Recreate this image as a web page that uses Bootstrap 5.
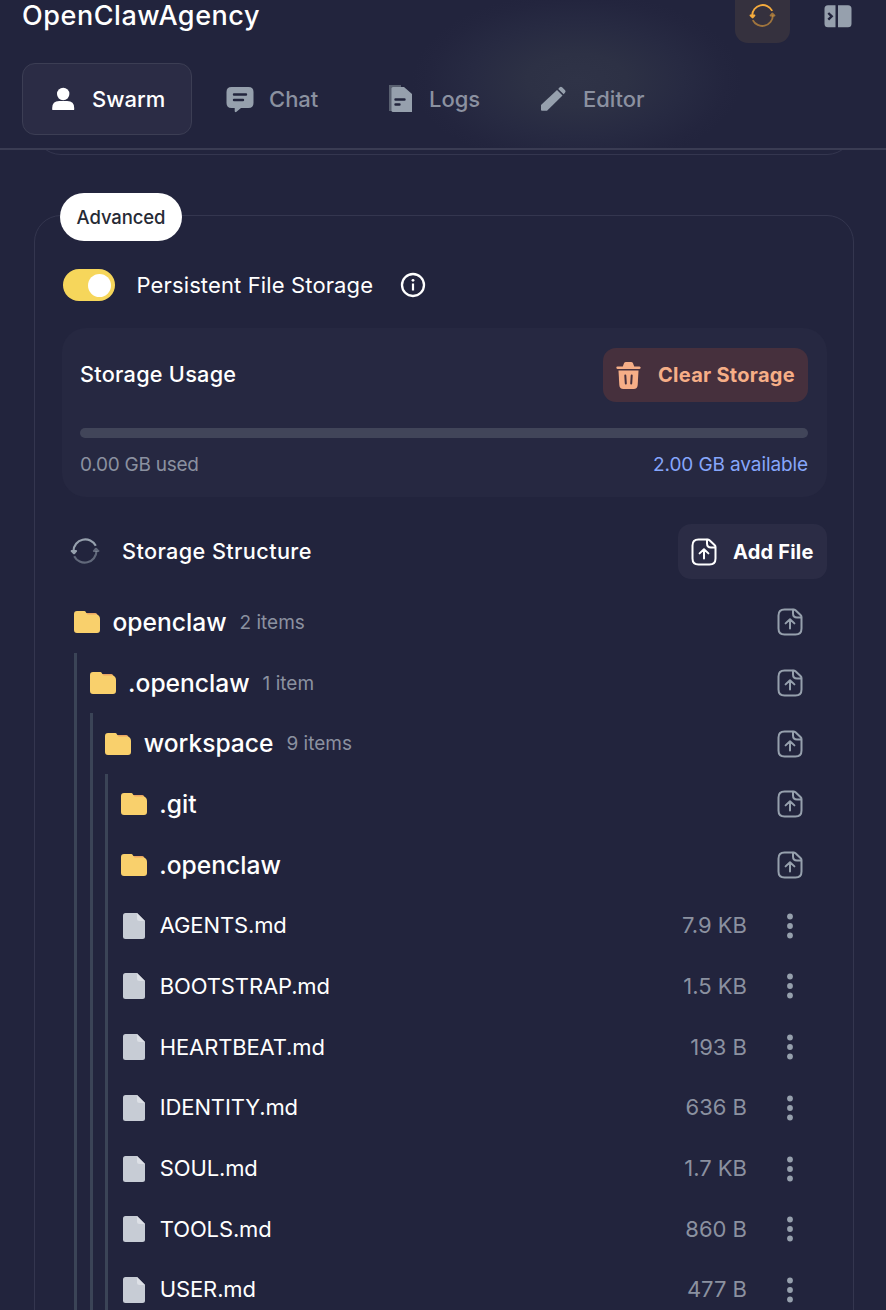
<!DOCTYPE html>
<html lang="en">
<head>
<meta charset="utf-8">
<meta name="viewport" content="width=device-width, initial-scale=1">
<title>OpenClawAgency</title>
<link href="https://cdn.jsdelivr.net/npm/bootstrap@5.3.0/dist/css/bootstrap.min.css" rel="stylesheet">
<style>
body{background:#22243d;color:#fff;font-family:Inter,"Liberation Sans",sans-serif;height:1310px;overflow:hidden}
svg{display:block;flex:none}
.lh0{line-height:1;white-space:nowrap}
.topbar{display:flow-root;height:150px;border-bottom:2px solid #3a3c53;padding:0 22px;background:radial-gradient(ellipse 165px 88px at 577px 80px,#2f3347 0,#2d3145 30%,#272a42 65%,#23253e 90%,#22243d 100%) #22243d;position:relative;z-index:2}
.brandrow{height:55px;margin-top:-12px;margin-bottom:20px}
.title{font-size:27px;font-weight:550;letter-spacing:.55px;position:relative;top:-.5px}
.sync{width:55px;height:55px;border-radius:13px;background:#35313e;color:#f5ab3d;margin-right:34px}
.panelicon{margin-right:11px}
.tab{height:72px;padding-left:26px;gap:14px;font-size:22px;font-weight:500;color:#8b91a0;border:0 solid #3c3e54;border-radius:13px}
.tab.on{width:170px;color:#fff;background:#2b2c45;border-width:1px;padding-left:25px;font-weight:550}
.t2{width:153px;margin-left:7px}.t3{width:147px;margin-left:7px}.t4{margin-left:7px}
.prev{height:60px;margin:-55px 32px 0 34px;border:1px solid #34364f;border-radius:27px}
.panel{margin:60px 32px 0 34px;height:1150px;border:1px solid #34364f;border-radius:27px;padding:53px 26px 0 27px}
.pill{left:25px;top:-23px;width:122px;height:48px;border-radius:24px;background:#fff;color:#262a35;font-size:18.5px;font-weight:500;letter-spacing:-.1px}
.switch{width:52px;height:32px;border-radius:16px;background:#f6d65b;padding:0 4.5px;margin-left:1px}
.knob{width:23px;height:23px;border-radius:50%;background:#fff}
.label{font-size:22px;margin-left:21.5px;letter-spacing:.13px}
.info{margin-left:27px}
.usage{margin-top:27px;height:169px;border-radius:24px;background:#262841;padding:20px 19px 0 18px}
.head{font-size:21.7px;font-weight:550;letter-spacing:.25px}
.clear{width:205px;height:54px;border-radius:13px;background:#46303d;color:#f6ae87;font-size:20px;font-weight:700;letter-spacing:.28px;padding-left:11px;gap:15px}
.track{height:10px;border-radius:5px;background:#414559;margin-top:26px}
.meta{font-size:19px;color:#8b91a0}
.caps{margin-top:17px;letter-spacing:-.25px}
.avail{color:#86a6fb;letter-spacing:-.1px}
.struct{margin:27px 0 13px}
.refresh{margin:0 22px 0 8px;position:relative;top:-1px}
.struct .head{letter-spacing:.38px}
.addf{width:149px;height:55px;border-radius:13px;background:#2b2c45;font-size:20px;font-weight:700;letter-spacing:.2px;padding-left:12px;gap:15px}
.row1{height:60.7px;padding-right:23px}
.dir{font-size:24.6px;font-weight:550;letter-spacing:0;margin:0 13px 0 12.5px}
.folder{margin-left:12px}
.doc{margin:0 15px 0 14px}
.dots{margin-right:11px}
.kids{margin-left:12px;border-left:3px solid #3b4457;padding-left:.6px}
.file{font-size:22px;letter-spacing:-.13px;position:relative;top:-.5px}
.size{font-size:22px;color:#8b91a0;margin-right:40px;position:relative;top:-.5px}
.gray{color:#96a0ad}
</style>
</head>
<body>
<svg width="0" height="0" class="position-absolute">
<symbol id="sync" viewBox="0 0 30 30"><g fill="none" stroke="currentColor" stroke-width="2.100"><path d="M3.500 15A11.800 11.800 0 0 1 25.800 9.800"/><path opacity=".55" d="M26.500 15A11.800 11.800 0 0 1 4.200 20.200"/></g><path fill="currentColor" d="M1.300 14h5.100q1.200.5.500 1.600L4.900 17.900q-.9.700-1.700 0L.8 15.600q-.6-1.100.5-1.600z"/><path opacity=".55" fill="currentColor" d="M28.700 16h-5.100q-1.200-.5-.5-1.600l2-2.300q.9-.7 1.700 0l2.400 2.300q.6 1.100-.5 1.600z"/></symbol>
<symbol id="up" viewBox="0 0 28 28"><g fill="none" stroke="currentColor" stroke-width="2" stroke-linecap="round" stroke-linejoin="round"><path d="M17.500 1.500H8.500Q2.500 1.500 2.500 7.500v13q0 6 6 6h11q6 0 6-6V9q0-1-1-2L19.500 2.200q-.8-.7-2-.7z"/><path d="M17 1.800v3.700q0 4 4 4h4"/><path d="M14 20.500v-9M9.600 15.400L14 11.200l4.400 4.200"/></g></symbol>
<symbol id="folder" viewBox="0 0 26 22"><path fill="#eaa663" d="M11 2h10.500q1.800 0 2 2.500l-1 2H9z"/><path fill="#f9d06c" d="M3 0h7.500q1.200 0 1.500 1.500L13.500 3.500H23q3 1 3 4.500V19q0 3-3 3H3q-3 0-3-3V3Q0 0 3 0z"/></symbol>
<symbol id="doc" viewBox="0 0 22 26"><path fill="#c7ccd5" d="M2.500 0H14l8 8v15.500Q22 26 19.500 26h-17Q0 26 0 23.500v-21Q0 0 2.500 0z"/><path fill="#dde0e6" d="M14 0l8 8h-5.500Q14 8 14 5.500z"/></symbol>
<symbol id="dots" viewBox="0 0 6 26"><g fill="currentColor"><circle cx="3" cy="3.500" r="2.900"/><circle cx="3" cy="13" r="2.900"/><circle cx="3" cy="22.500" r="2.900"/></g></symbol>
</svg>

<header class="topbar">
  <div class="brandrow d-flex align-items-center">
    <div class="title lh0 me-auto">OpenClawAgency</div>
    <div class="sync d-flex align-items-center justify-content-center"><svg width="27" height="27"><use href="#sync"/></svg></div>
    <svg class="gray panelicon" width="29" height="24" viewBox="0.500 0 29 24"><path fill="currentColor" d="M4.500 1.200H12v22H4.500q-3.500 0-3.500-3.500v-15q0-3.500 3.500-3.500zM14.500 1.200h10q3.500 0 3.500 3.500v15q0 3.500-3.500 3.500h-10z"/><path d="M4.800 9l3.400 3.300-3.400 3.300" fill="none" stroke="#22243d" stroke-width="2.400"/></svg>
  </div>
  <nav class="d-flex">
    <div class="tab on lh0 d-flex align-items-center"><svg width="30" height="30" viewBox="0 0 30 30" fill="#fff"><circle cx="15.200" cy="10" r="6.200"/><path d="M4.200 25.500v-1.500Q4.200 17 11.200 17h8q7 0 7 7v1.500q0 .5-1 .5h-20q-1 0-1-.5z"/></svg><span>Swarm</span></div>
    <div class="tab t2 lh0 d-flex align-items-center"><svg class="gray" width="30" height="30" viewBox="0 0 30 30"><path fill="currentColor" d="M6.500 3h17q5 0 5 5v11q0 5-5 5H16l-4.500 3.800q-1.800 1-1.800-.8v-3H6.500q-5 0-5-5V8q0-5 5-5z"/><path d="M9 10.500h12M9 16h9" stroke="#22243d" stroke-width="2.400" stroke-linecap="round"/></svg><span>Chat</span></div>
    <div class="tab t3 lh0 d-flex align-items-center"><svg class="gray" width="30" height="30" viewBox="0 0 30 30"><path fill="#596070" d="M4 1h12v3H7v23H4z"/><path fill="currentColor" d="M8 3h11l8 7v18H8q-1.500 0-1.500-1.500v-22Q6.500 3 8 3z"/><path d="M10.500 15.500h9M10.500 20.500h4" stroke="#22243d" stroke-width="2.400" stroke-linecap="round"/></svg><span>Logs</span></div>
    <div class="tab t4 lh0 d-flex align-items-center"><svg class="gray" width="30" height="30" viewBox="0 0 30 30" fill="currentColor"><path d="M2 21L18 6l5.500 5.500L8 26.800H3Q2 26.800 2 26z"/><path d="M19.200 4.900l1.500-1.600q1.200-1 2.400 0l3 3q1 1.200 0 2.300l-1.400 1.600z"/></svg><span>Editor</span></div>
  </nav>
</header>

<main>
  <div class="prev"></div>
  <section class="panel position-relative">
    <div class="pill lh0 position-absolute d-flex align-items-center justify-content-center">Advanced</div>
    <div class="d-flex align-items-center">
      <div class="switch d-flex align-items-center justify-content-end"><div class="knob"></div></div>
      <div class="label lh0">Persistent File Storage</div>
      <svg class="info" width="26" height="26" viewBox="0 0 26 26"><circle cx="13" cy="13" r="11" fill="none" stroke="#fff" stroke-width="2.300"/><path d="M13 11.500v7" stroke="#fff" stroke-width="2.200"/><circle cx="13" cy="8.300" r="1.400" fill="#fff"/></svg>
    </div>
    <div class="usage">
      <div class="d-flex align-items-center justify-content-between">
        <div class="head lh0">Storage Usage</div>
        <div class="clear lh0 d-flex align-items-center"><svg width="29" height="30" viewBox="0 0 29 30" fill="currentColor"><path d="M3.500 6.500h5.300L10 3.200q.5-1.200 2-1.200h5q1.500 0 2 1.200l1.200 3.300h5.300q1.200.2 1.200 1.200T25.500 9h-22Q2.300 8.800 2.300 7.700t1.200-1.200z"/><path d="M4.500 10.500h20L23.700 25q-.3 4-4 4H9.300q-3.700 0-4-4z"/><path d="M11.300 15.500l.5 8M17.700 15.500l-.5 8" stroke="#46303d" stroke-width="2" stroke-linecap="round"/></svg><span>Clear Storage</span></div>
      </div>
      <div class="track"></div>
      <div class="meta caps lh0 d-flex justify-content-between"><span>0.00 GB used</span><span class="avail">2.00 GB available</span></div>
    </div>
    <div class="struct d-flex align-items-center">
      <svg class="gray refresh" width="30" height="30"><use href="#sync"/></svg>
      <div class="head lh0 me-auto">Storage Structure</div>
      <div class="addf lh0 d-flex align-items-center"><svg width="28" height="28"><use href="#up"/></svg><span>Add File</span></div>
    </div>
    <div id="tree"></div>
  </section>
</main>
<script src="https://cdn.jsdelivr.net/npm/bootstrap@5.3.0/dist/js/bootstrap.bundle.min.js"></script>
<script>
const files=[["AGENTS.md","7.9 KB"],["BOOTSTRAP.md","1.5 KB"],["HEARTBEAT.md","193 B"],["IDENTITY.md","636 B"],["SOUL.md","1.7 KB"],["TOOLS.md","860 B"],["USER.md","477 B"]];
const dir=(n,c)=>`<div class="row1 lh0 d-flex align-items-center"><svg class="folder" width="26" height="22"><use href="#folder"/></svg><span class="dir">${n}</span><span class="meta me-auto">${c}</span><svg class="gray" width="28" height="28"><use href="#up"/></svg></div>`;
const file=([n,s])=>`<div class="row1 lh0 d-flex align-items-center"><svg class="doc" width="22" height="26"><use href="#doc"/></svg><span class="file me-auto">${n}</span><span class="size">${s}</span><svg class="gray dots" width="6" height="26"><use href="#dots"/></svg></div>`;
document.getElementById("tree").innerHTML=dir("openclaw","2 items")+`<div class="kids">${dir(".openclaw","1 item")}<div class="kids">${dir("workspace","9 items")}<div class="kids">${dir(".git","")}${dir(".openclaw","")}${files.map(file).join("")}</div></div></div>`;
</script>
</body>
</html>
